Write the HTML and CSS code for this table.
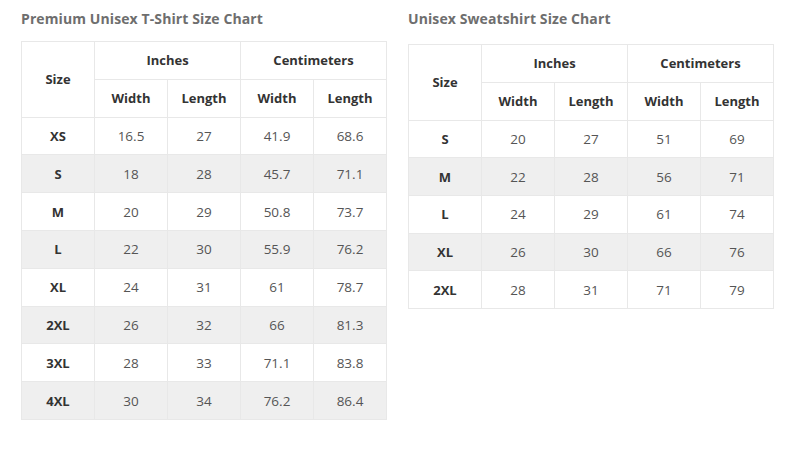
FILE: index.html
```html
<!DOCTYPE html>
<html>
<head>
<meta charset="utf-8">
<link rel="stylesheet" href="styles.css">
</head>
<body>
<div class="page">
  <section class="chart">
    <h2 class="title">Premium Unisex T-Shirt Size Chart</h2>
    <table class="sizes">
      <thead>
        <tr><th rowspan="2">Size</th><th colspan="2">Inches</th><th colspan="2">Centimeters</th></tr>
        <tr><th>Width</th><th>Length</th><th>Width</th><th>Length</th></tr>
      </thead>
      <tbody>
        <tr><th>XS</th><td>16.5</td><td>27</td><td>41.9</td><td>68.6</td></tr>
        <tr><th>S</th><td>18</td><td>28</td><td>45.7</td><td>71.1</td></tr>
        <tr><th>M</th><td>20</td><td>29</td><td>50.8</td><td>73.7</td></tr>
        <tr><th>L</th><td>22</td><td>30</td><td>55.9</td><td>76.2</td></tr>
        <tr><th>XL</th><td>24</td><td>31</td><td>61</td><td>78.7</td></tr>
        <tr><th>2XL</th><td>26</td><td>32</td><td>66</td><td>81.3</td></tr>
        <tr><th>3XL</th><td>28</td><td>33</td><td>71.1</td><td>83.8</td></tr>
        <tr><th>4XL</th><td>30</td><td>34</td><td>76.2</td><td>86.4</td></tr>
      </tbody>
    </table>
  </section>
  <section class="chart chart-right">
    <h2 class="title">Unisex Sweatshirt Size Chart</h2>
    <table class="sizes">
      <thead>
        <tr><th rowspan="2">Size</th><th colspan="2">Inches</th><th colspan="2">Centimeters</th></tr>
        <tr><th>Width</th><th>Length</th><th>Width</th><th>Length</th></tr>
      </thead>
      <tbody>
        <tr><th>S</th><td>20</td><td>27</td><td>51</td><td>69</td></tr>
        <tr><th>M</th><td>22</td><td>28</td><td>56</td><td>71</td></tr>
        <tr><th>L</th><td>24</td><td>29</td><td>61</td><td>74</td></tr>
        <tr><th>XL</th><td>26</td><td>30</td><td>66</td><td>76</td></tr>
        <tr><th>2XL</th><td>28</td><td>31</td><td>71</td><td>79</td></tr>
      </tbody>
    </table>
  </section>
</div>
</body>
</html>
```

FILE: styles.css
```css
html, body {
  margin: 0;
  padding: 0;
  background: #ffffff;
}
body {
  font-family: "Open Sans", "Liberation Sans", sans-serif;
  color: #555555;
}
.page {
  display: flex;
  gap: 21px;
  padding: 9px 21px 0 21px;
  align-items: flex-start;
}
.chart {
  width: 366px;
}
.title {
  margin: 0 0 13px 0;
  font-size: 14px;
  font-weight: 700;
  color: #6e6e6e;
  line-height: 19px;
  letter-spacing: 0.1px;
}
.chart-right .title {
  margin-bottom: 16px;
}
.sizes {
  width: 366px;
  border-collapse: collapse;
  table-layout: fixed;
  font-size: 13px;
}
.sizes th, .sizes td {
  border: 1px solid #e8e8e8;
  height: 36.8px;
  padding: 0;
  text-align: center;
  vertical-align: middle;
}
.sizes th {
  font-weight: 700;
  color: #333333;
}
.sizes td {
  color: #555555;
  font-size: 13.5px;
}
.sizes tbody tr:nth-child(even) th,
.sizes tbody tr:nth-child(even) td {
  background: #efefef;
}
.chart-right .sizes tbody th,
.chart-right .sizes tbody td {
  height: 36.7px;
}
```
